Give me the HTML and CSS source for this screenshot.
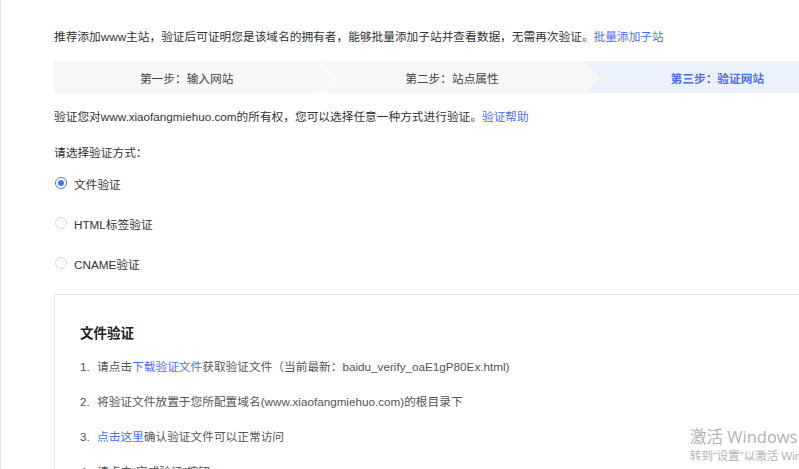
FILE: index.html
```html
<!DOCTYPE html>
<html lang="zh-CN">
<head>
<meta charset="utf-8">
<title>验证网站</title>
<link rel="stylesheet" href="styles.css">
</head>
<body>
<div class="page">
  <p class="intro">推荐添加www主站，验证后可证明您是该域名的拥有者，能够批量添加子站并查看数据，无需再次验证。<a class="link" href="#">批量添加子站</a></p>

  <div class="steps">
    <div class="step step-1">第一步：输入网站</div>
    <div class="step step-2">第二步：站点属性</div>
    <div class="step step-3">第三步：验证网站</div>
  </div>

  <p class="desc">验证您对www.xiaofangmiehuo.com的所有权，您可以选择任意一种方式进行验证。<a class="link" href="#">验证帮助</a></p>

  <p class="choose">请选择验证方式：</p>

  <ul class="radios">
    <li class="radio-row"><span class="radio checked"></span><span>文件验证</span></li>
    <li class="radio-row"><span class="radio"></span><span>HTML标签验证</span></li>
    <li class="radio-row"><span class="radio"></span><span>CNAME验证</span></li>
  </ul>

  <div class="panel">
    <h3 class="panel-title">文件验证</h3>
    <ol class="items">
      <li><span class="num">1.</span>请点击<a class="link" href="#">下载验证文件</a>获取验证文件（当前最新：baidu_verify_oaE1gP80Ex.html)</li>
      <li><span class="num">2.</span>将验证文件放置于您所配置域名(www.xiaofangmiehuo.com)的根目录下</li>
      <li><span class="num">3.</span><a class="link" href="#">点击这里</a>确认验证文件可以正常访问</li>
      <li><span class="num">4.</span>请点击“完成验证”按钮</li>
    </ol>
  </div>
</div>

<div class="watermark">
  <div class="wm-title">激活 Windows</div>
  <div class="wm-sub">转到“设置”以激活 Windows。</div>
</div>
</body>
</html>
```

FILE: styles.css
```css
html, body {
  margin: 0;
  padding: 0;
  overflow: hidden;
  background: #fff;
}

body {
  font-family: "Liberation Sans", "Noto Sans CJK SC", sans-serif;
  font-size: 11.7px;
  color: #333;
  width: 799px;
  height: 469px;
  position: relative;
}

.page {
  border-left: 1px solid #e6e6e6;
  height: 469px;
  padding: 27px 0 0 53px;
  box-sizing: border-box;
  width: 900px;
}

p {
  margin: 0;
  line-height: 20px;
}

.link {
  color: #4e6ef2;
  text-decoration: none;
}

.steps {
  margin-top: 14px;
  display: flex;
  width: 796px;
  height: 32px;
}

.step {
  position: relative;
  flex: 1 1 0;
  display: flex;
  align-items: center;
  justify-content: center;
  background: #f7f7f7;
  color: #444;
}

.step-1 { z-index: 3; }
.step-2 { z-index: 2; }
.step-3 {
  z-index: 1;
  background: #ebf2fe;
  color: #4e6ef2;
  font-weight: 700;
}

.step-1::after,
.step-2::after {
  content: "";
  position: absolute;
  right: -11.3px;
  top: 4.7px;
  width: 22.6px;
  height: 22.6px;
  box-sizing: border-box;
  background: #f7f7f7;
  transform: rotate(45deg);
}

.step-1::after {
  border-top: 1.5px solid #fff;
  border-right: 1.5px solid #fff;
}

.desc {
  margin-top: 14px;
}

.choose {
  margin-top: 16px;
}

.radios {
  list-style: none;
  margin: 0;
  padding: 0;
}

.radio-row {
  height: 40px;
  display: flex;
  align-items: center;
  gap: 7px;
}

.radio {
  width: 12px;
  height: 12px;
  box-sizing: border-box;
  border: 1px solid #d9d9d9;
  border-radius: 50%;
  display: flex;
  align-items: center;
  justify-content: center;
  margin-left: 1px;
}

.radio.checked {
  border-color: #4e6ef2;
}

.radio.checked::after {
  content: "";
  width: 6px;
  height: 6px;
  border-radius: 50%;
  background: #4e6ef2;
}

.panel {
  margin-top: 11px;
  border: 1px solid #e5e5e5;
  width: 796px;
  height: 300px;
  box-sizing: border-box;
  padding: 27px 0 0 25px;
}

.panel-title {
  margin: 0 0 7px;
  font-family: "Noto Sans CJK SC", sans-serif;
  font-size: 13.5px;
  line-height: 20px;
  font-weight: 700;
  color: #222;
}

.items {
  list-style: none;
  margin: 0;
  padding: 0;
  color: #555;
}

.items li {
  line-height: 35px;
}

.num {
  display: inline-block;
  width: 17px;
}

.watermark {
  position: absolute;
  left: 690px;
  top: 426px;
  color: #b3b3b3;
  white-space: nowrap;
}

.wm-title {
  font-family: "Open Sans", "Noto Sans CJK SC", sans-serif;
  font-size: 16.5px;
  line-height: 22px;
}

.wm-sub {
  font-size: 11.5px;
  line-height: 16px;
}
```
